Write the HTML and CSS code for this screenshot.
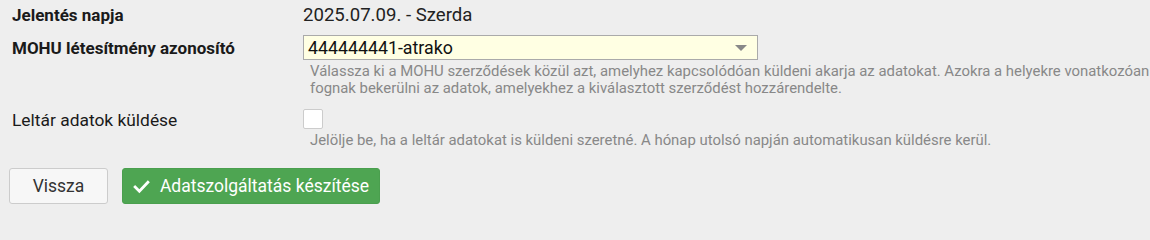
FILE: index.html
```html
<!DOCTYPE html>
<html lang="hu">
<head>
<meta charset="utf-8">
<link rel="stylesheet" href="styles.css">
</head>
<body>
<div class="form">
  <div class="row row-first">
    <div class="label strong">Jelentés napja</div>
    <div class="field"><div class="value">2025.07.09. - Szerda</div></div>
  </div>
  <div class="row">
    <div class="label strong label-select">MOHU létesítmény azonosító</div>
    <div class="field">
      <div class="select">
        <span>444444441-atrako</span>
        <span class="caret"></span>
      </div>
      <div class="help">Válassza ki a MOHU szerződések közül azt, amelyhez kapcsolódóan küldeni akarja az adatokat. Azokra a helyekre vonatkozóan fognak bekerülni az adatok, amelyekhez a kiválasztott szerződést hozzárendelte.</div>
    </div>
  </div>
  <div class="row row-check">
    <div class="label label-check">Leltár adatok küldése</div>
    <div class="field">
      <div class="checkbox"></div>
      <div class="help">Jelölje be, ha a leltár adatokat is küldeni szeretné. A hónap utolsó napján automatikusan küldésre kerül.</div>
    </div>
  </div>
  <div class="actions">
    <button class="btn btn-default">Vissza</button>
    <button class="btn btn-success"><svg class="check" viewBox="0 0 16 16" width="17" height="17"><path d="M2 8.5 L6 12.5 L14 4" fill="none" stroke="#fff" stroke-width="2.6" stroke-linecap="square"/></svg>Adatszolgáltatás készítése</button>
  </div>
</div>
</body>
</html>
```
FILE: styles.css
```css
html, body {
  margin: 0;
  padding: 0;
  background: #eeeeee;
  font-family: Roboto, "Noto Sans", sans-serif;
  color: #222;
  overflow: hidden;
}
.form {
  padding: 3px 0 0 12px;
}
.row {
  display: grid;
  grid-template-columns: 291px 1fr;
}
.label {
  font-size: 17.4px;
  line-height: 24px;
  color: #1a1a1a;
}
.strong {
  font-weight: 700;
  font-size: 17px;
}
.row-first {
  height: 32px;
}
.value {
  font-size: 18.6px;
  line-height: 24px;
  color: #222;
}
.label-select {
  padding-top: 1px;
}
.select {
  height: 23px;
  border: 1px solid #aaa;
  background: #ffffe3;
  display: flex;
  align-items: center;
  justify-content: space-between;
  font-size: 17.8px;
  color: #111;
  padding: 0 10px 0 4px;
  box-sizing: content-box;
  width: 439px;
}
.caret {
  width: 0;
  height: 0;
  border-left: 6px solid transparent;
  border-right: 6px solid transparent;
  border-top: 6px solid #888;
}
.help {
  font-size: 14.9px;
  line-height: 17px;
  color: #888;
  padding: 3px 0 0 7px;
}
.row-check {
  margin-top: 11px;
}
.label-check {
  padding-top: 0;
}
.checkbox {
  width: 18px;
  height: 18px;
  margin-top: 1px;
  background: #fff;
  border: 1px solid #ccc;
  border-radius: 2px;
}
.actions {
  display: flex;
  gap: 14px;
  margin: 19px 0 0 -3px;
}
.btn {
  font-family: Roboto, "Noto Sans", sans-serif;
  font-size: 17.5px;
  height: 36px;
  box-sizing: border-box;
  border-radius: 3px;
  padding: 0;
  display: flex;
  align-items: center;
  justify-content: center;
  white-space: nowrap;
  cursor: pointer;
}
.btn-default {
  width: 99px;
  background: #f7f7f7;
  border: 1px solid #ccc;
  color: #333;
}
.btn-success {
  width: 258px;
  background: #4ea552;
  border: 1px solid #4a9f4e;
  color: #fff;
  gap: 10px;
}
.check {
  display: block;
}
```
